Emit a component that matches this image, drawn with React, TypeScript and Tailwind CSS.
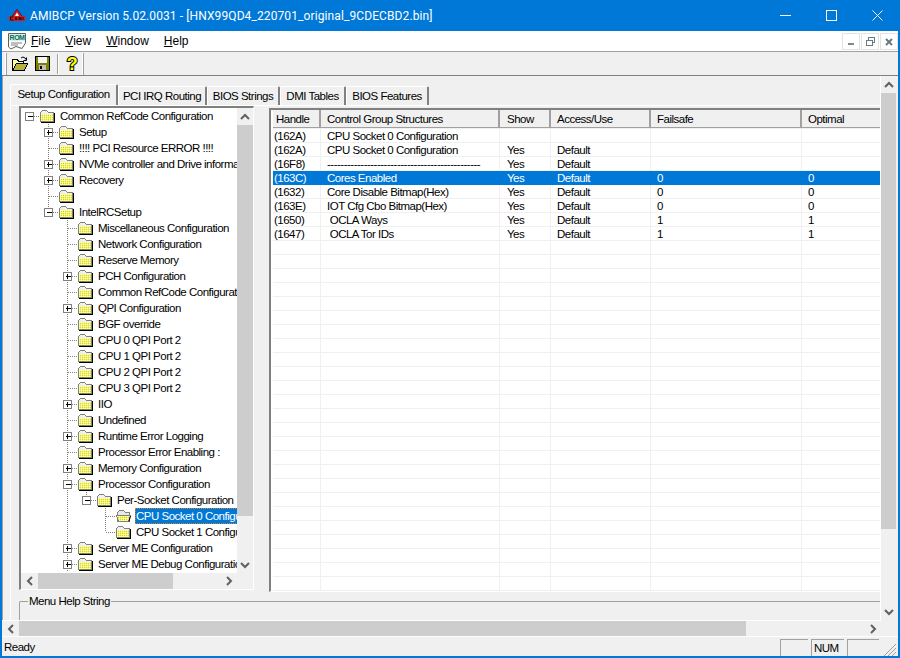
type TreeRow = { t: string; l: number; e?: '+' | '-'; open?: boolean; sel?: boolean };

const tree: TreeRow[] = [
  { t: 'Common RefCode Configuration', l: 0, e: '-' },
  { t: 'Setup', l: 1, e: '+' },
  { t: '!!!! PCI Resource ERROR !!!!', l: 1 },
  { t: 'NVMe controller and Drive information', l: 1, e: '+' },
  { t: 'Recovery', l: 1, e: '+' },
  { t: '', l: 1 },
  { t: 'IntelRCSetup', l: 1, e: '-' },
  { t: 'Miscellaneous Configuration', l: 2 },
  { t: 'Network Configuration', l: 2 },
  { t: 'Reserve Memory', l: 2 },
  { t: 'PCH Configuration', l: 2, e: '+' },
  { t: 'Common RefCode Configuration', l: 2 },
  { t: 'QPI Configuration', l: 2, e: '+' },
  { t: 'BGF override', l: 2 },
  { t: 'CPU 0 QPI Port 2', l: 2 },
  { t: 'CPU 1 QPI Port 2', l: 2 },
  { t: 'CPU 2 QPI Port 2', l: 2 },
  { t: 'CPU 3 QPI Port 2', l: 2 },
  { t: 'IIO', l: 2, e: '+' },
  { t: 'Undefined', l: 2 },
  { t: 'Runtime Error Logging', l: 2, e: '+' },
  { t: 'Processor Error Enabling :', l: 2 },
  { t: 'Memory Configuration', l: 2, e: '+' },
  { t: 'Processor Configuration', l: 2, e: '-' },
  { t: 'Per-Socket Configuration', l: 3, e: '-' },
  { t: 'CPU Socket 0 Configuration', l: 4, open: true, sel: true },
  { t: 'CPU Socket 1 Configuration', l: 4 },
  { t: 'Server ME Configuration', l: 2, e: '+' },
  { t: 'Server ME Debug Configuration', l: 2, e: '+' },
];

const columns = [
  { name: 'Handle', w: 'w-[48px]', head: 'pl-[3px]', cell: 'pl-[1px]' },
  { name: 'Control Group Structures', w: 'w-[179px]', head: 'pl-[6px]', cell: 'pl-[6px]' },
  { name: 'Show', w: 'w-[51px]', head: 'pl-[7px]', cell: 'pl-[7px]' },
  { name: 'Access/Use', w: 'w-[100px]', head: 'pl-[6px]', cell: 'pl-[6px]' },
  { name: 'Failsafe', w: 'w-[151px]', head: 'pl-[6px]', cell: 'pl-[6px]' },
  { name: 'Optimal', w: 'w-[100px]', head: 'pl-[6px]', cell: 'pl-[6px]' },
];

const data = [
  ['(162A)', 'CPU Socket 0 Configuration', '', '', '', ''],
  ['(162A)', 'CPU Socket 0 Configuration', 'Yes', 'Default', '', ''],
  ['(16F8)', '----------------------------------------------', 'Yes', 'Default', '', ''],
  ['(163C)', 'Cores Enabled', 'Yes', 'Default', '0', '0'],
  ['(1632)', 'Core Disable Bitmap(Hex)', 'Yes', 'Default', '0', '0'],
  ['(163E)', 'IOT Cfg Cbo Bitmap(Hex)', 'Yes', 'Default', '0', '0'],
  ['(1650)', ' OCLA Ways', 'Yes', 'Default', '1', '1'],
  ['(1647)', ' OCLA Tor IDs', 'Yes', 'Default', '1', '1'],
];

const emptyRows = Array.from({ length: 25 }, () => ['', '', '', '', '', '']);

function hasNextSibling(i: number, level: number) {
  for (let k = i + 1; k < tree.length; k++) {
    if (tree[k].l === level) return true;
    if (tree[k].l < level) return false;
  }
  return level === 2;
}

function Guides({ row, i }: { row: TreeRow; i: number }) {
  const w = 19 + 19 * row.l;
  const cx = 8.5 + 19 * row.l;
  const dotted = { stroke: '#808080', strokeDasharray: '1 1', shapeRendering: 'crispEdges' as const };
  const ancestors = [];
  for (let j = 1; j < row.l; j++) {
    if (hasNextSibling(i, j)) ancestors.push(8.5 + 19 * j);
  }
  return (
    <svg width={w} height={16} className="shrink-0">
      {ancestors.map((x) => (
        <line key={x} x1={x} x2={x} y1={0} y2={16} {...dotted} />
      ))}
      {row.l > 0 && <line x1={cx} x2={cx} y1={0} y2={hasNextSibling(i, row.l) ? 16 : 8} {...dotted} />}
      <line x1={cx} x2={w} y1={8.5} y2={8.5} {...dotted} />
      {row.e && (
        <g shapeRendering="crispEdges">
          <rect x={cx - 4} y={4.5} width={8} height={8} fill="#fff" stroke="#808080" />
          <line x1={cx - 2} x2={cx + 3} y1={8.5} y2={8.5} stroke="#000" />
          {row.e === '+' && <line x1={cx} x2={cx} y1={6} y2={11} stroke="#000" />}
        </g>
      )}
    </svg>
  );
}

function Folder({ open }: { open?: boolean }) {
  return (
    <svg width={15} height={14} viewBox="0 0 15 14" className="shrink-0" shapeRendering="crispEdges">
      <defs>
        <pattern id="dither" width="2" height="2" patternUnits="userSpaceOnUse">
          <rect width="2" height="2" fill="#ffff30" />
          <rect width="1" height="1" fill="#c8c8a0" />
          <rect x="1" y="1" width="1" height="1" fill="#ffffd0" />
        </pattern>
      </defs>
      {open ? (
        <>
          <path d="M1.5 3.5 L3.5 1.5 H7.5 L9.5 3.5 H13.5 V12.5 H1.5 Z" fill="#e8e8e8" stroke="#808080" />
          <path d="M0.5 6.5 H14.5 L12.5 12.5 H2.5 Z" fill="url(#dither)" stroke="#808080" />
          <path d="M13 12.5 L14.5 7" stroke="#000" fill="none" shapeRendering="auto" />
        </>
      ) : (
        <>
          <path d="M0.5 3.5 L2.5 1.5 H6.5 L8.5 3.5 H13.5 V12.5 H0.5 Z" fill="#f0f0f0" stroke="#808080" />
          <rect x="1" y="5" width="12" height="7" fill="url(#dither)" />
          <path d="M14.5 4 V13.5 H1" stroke="#000" fill="none" />
        </>
      )}
    </svg>
  );
}

function Chevron({ dir }: { dir: 'up' | 'down' | 'left' | 'right' }) {
  const pts = {
    up: '1,6 5,2 9,6',
    down: '1,2 5,6 9,2',
    left: '6,1 2,5 6,9',
    right: '2,1 6,5 2,9',
  }[dir];
  const vertical = dir === 'up' || dir === 'down';
  return (
    <svg width={vertical ? 10 : 8} height={vertical ? 8 : 10} className="shrink-0">
      <polyline points={pts} fill="none" stroke="#606060" strokeWidth="2" />
    </svg>
  );
}

function VScroll({ thumb, cls }: { thumb: string; cls: string }) {
  return (
    <div className={`flex flex-col bg-[#f0f0f0] ${cls}`}>
      <div className="flex h-[17px] shrink-0 items-center justify-center">
        <Chevron dir="up" />
      </div>
      <div className={`shrink-0 bg-[#cdcdcd] ${thumb}`} />
      <div className="flex-1" />
      <div className="flex h-[17px] shrink-0 items-center justify-center">
        <Chevron dir="down" />
      </div>
    </div>
  );
}

function HScroll({ thumb, cls }: { thumb: string; cls: string }) {
  return (
    <div className={`flex bg-[#f0f0f0] ${cls}`}>
      <div className="flex w-[17px] shrink-0 items-center justify-center">
        <Chevron dir="left" />
      </div>
      <div className={`shrink-0 bg-[#cdcdcd] ${thumb}`} />
      <div className="flex-1" />
      <div className="flex w-[17px] shrink-0 items-center justify-center">
        <Chevron dir="right" />
      </div>
    </div>
  );
}

function Tree() {
  return (
    <div className="flex h-[484px] w-[235px] shrink-0 flex-col border-t-2 border-r border-b border-l-2 border-t-[#808080] border-r-white border-b-white border-l-[#808080]">
      <div className="flex min-h-0 flex-1">
        <div className="min-w-0 flex-1 overflow-hidden bg-white">
          {tree.map((row, i) => (
            <div key={i} className="flex h-4 items-center whitespace-nowrap">
              <Guides row={row} i={i} />
              <Folder open={row.open} />
              <span
                className={
                  row.sel
                    ? 'ml-[4px] flex-1 bg-[#0078d7] px-[1px] leading-[16px] text-white outline-1 -outline-offset-1 outline-dotted outline-[#e08020]'
                    : 'ml-[4px] px-[1px] leading-[16px]'
                }
              >
                {row.t}
              </span>
            </div>
          ))}
        </div>
        <VScroll thumb="h-[391px]" cls="w-4 shrink-0" />
      </div>
      <div className="flex h-[16px] shrink-0">
        <HScroll thumb="w-[135px]" cls="flex-1" />
        <div className="w-4 bg-[#f0f0f0]" />
      </div>
    </div>
  );
}

function Grid() {
  return (
    <div className="mt-[2px] h-[484px] w-[640px] shrink-0 overflow-hidden border-t-2 border-b border-l-2 border-t-[#808080] border-b-white border-l-[#808080] bg-white pl-[2px]">
      <div className="flex h-[18px] bg-[#f0f0f0]">
        {columns.map((c) => (
          <div
            key={c.name}
            className={`${c.w} ${c.head} shrink-0 border-r-2 border-b border-r-[#a0a0a0] border-b-[#a0a0a0] leading-[18px]`}
          >
            {c.name}
          </div>
        ))}
      </div>
      <div className="h-[1px] bg-[#f0f0f0]" />
      {[...data, ...emptyRows].map((row, r) => (
        <div key={r} className={`flex h-[14px] ${r === 3 ? 'bg-[#0078d7] text-white' : ''}`}>
          {row.map((cell, c) => (
            <div
              key={c}
              className={`${columns[c].w} ${columns[c].cell} shrink-0 overflow-hidden whitespace-pre leading-[14px] ${
                r === 3 ? '' : 'border-r border-b border-[#f0f0f0]'
              }`}
            >
              {cell}
            </div>
          ))}
        </div>
      ))}
    </div>
  );
}

function Tabs() {
  const rest = [
    { name: 'PCI IRQ Routing', w: 'w-[89px]' },
    { name: 'BIOS Strings', w: 'w-[73px]' },
    { name: 'DMI Tables', w: 'w-[66px]' },
    { name: 'BIOS Features', w: 'w-[83px]' },
  ];
  return (
    <div className="flex h-[21px] items-end pl-[7px] whitespace-nowrap">
      <div className="flex h-[21px] w-[108px] justify-center rounded-t-[2px] border-t border-r-2 border-l border-t-white border-r-[#808080] border-l-white leading-[18px]">
        Setup Configuration
      </div>
      {rest.map((tab) => (
        <div
          key={tab.name}
          className={`${tab.w} flex h-[19px] justify-center rounded-t-[2px] border-t border-r-2 border-l border-t-white border-r-[#808080] border-l-white leading-[18px]`}
        >
          {tab.name}
        </div>
      ))}
    </div>
  );
}

function AppLogo() {
  return (
    <svg width={16} height={14} viewBox="0 0 16 14" className="shrink-0">
      <path d="M8 0.5 L13.5 8 H2.5 Z" fill="#d81e1e" stroke="#600000" strokeWidth="0.8" />
      <path d="M8 3.5 L10 7 H6 Z" fill="#fff" />
      <rect x="0" y="7" width="16" height="5" fill="#e01818" />
      <path d="M1.5 8 H4.5 M1.5 11 H4.5 M1.5 8 V11 M7 8 L6 11 M7 8 L8 11 M10 8 V11 M10 8 L12 11 M12 8 V11 M14 8 V11" stroke="#111" strokeWidth="1" fill="none" />
    </svg>
  );
}

function RomIcon() {
  return (
    <svg width={18} height={17} viewBox="0 0 18 17" className="shrink-0">
      <path d="M0.5 0.5 H17.5 V10 L14 15.5 L8 13.5 L3 16 L0.5 14 Z" fill="#fff" stroke="#606060" />
      <rect x="1" y="1" width="16" height="7" fill="#d8f0ea" />
      <text x="9" y="7.4" textAnchor="middle" fontSize="7" fontWeight="700" fill="#006c60" fontFamily="Liberation Sans, sans-serif">
        ROM
      </text>
      <path d="M3 10 H14 M3 12 H10" stroke="#808080" />
    </svg>
  );
}

function OpenIcon() {
  return (
    <svg width={16} height={16} viewBox="0 0 16 16" shapeRendering="crispEdges" className="shrink-0">
      <path d="M0.5 3.5 H5.5 L6.5 5.5 H11.5 V7.5 H4.5 L1.5 13.5 H0.5 Z" fill="#ffffa0" stroke="#000" />
      <path d="M4.5 7.5 H15.5 L12.5 14.5 H0.5 Z" fill="#b8b040" stroke="#000" />
      <path d="M9 2 Q11 0 13 2 L14.5 4 M14.5 1.5 V4.5 H11.5" fill="none" stroke="#000" shapeRendering="auto" />
    </svg>
  );
}

function SaveIcon() {
  return (
    <svg width={15} height={15} viewBox="0 0 15 15" shapeRendering="crispEdges" className="shrink-0">
      <rect x="0.5" y="0.5" width="14" height="14" fill="#808000" stroke="#000" />
      <rect x="3" y="1" width="9" height="6" fill="#f4f4f4" />
      <rect x="4" y="9" width="7" height="5" fill="#c0c0c0" />
      <rect x="5" y="10" width="2" height="3" fill="#000" />
    </svg>
  );
}

function HelpIcon() {
  return (
    <svg width={14} height={18} viewBox="0 0 14 18" className="shrink-0">
      <text x="7" y="15" textAnchor="middle" fontSize="18" fontWeight="700" fill="#ffff00" stroke="#000" strokeWidth="2" paintOrder="stroke" fontFamily="Liberation Sans, sans-serif">
        ?
      </text>
    </svg>
  );
}

function MdiButton({ children }: { children: React.ReactNode }) {
  return (
    <div className="flex h-[17px] w-[18px] items-center justify-center border border-[#e3e3e3] bg-white">
      {children}
    </div>
  );
}

function Menu({ first, rest }: { first: string; rest: string }) {
  return (
    <span>
      <span className="underline underline-offset-1">{first}</span>
      {rest}
    </span>
  );
}

export default function App() {
  return (
    <div className="flex h-[658px] w-[900px] flex-col overflow-hidden bg-[#0078d7] pr-[2px] pb-[2px] pl-[2px] font-['Liberation_Sans',sans-serif] text-[11.5px] tracking-[-0.5px] text-black">
      {/* title bar */}
      <div className="-mx-[2px] flex h-[31px] shrink-0 items-center pl-[9px] text-white">
        <AppLogo />
        <span className="ml-[5px] whitespace-nowrap font-['Roboto',sans-serif] text-[12px] tracking-[0.1px]">
          AMIBCP Version 5.02.0031 - [HNX99QD4_220701_original_9CDECBD2.bin]
        </span>
        <div className="ml-auto flex">
          <div className="flex h-[31px] w-[46px] items-center justify-center">
            <svg width={11} height={11} shapeRendering="crispEdges">
              <line x1={0} x2={11} y1={5.5} y2={5.5} stroke="#fff" />
            </svg>
          </div>
          <div className="flex h-[31px] w-[46px] items-center justify-center">
            <svg width={11} height={11} shapeRendering="crispEdges">
              <rect x={0.5} y={0.5} width={10} height={10} fill="none" stroke="#fff" />
            </svg>
          </div>
          <div className="flex h-[31px] w-[46px] items-center justify-center">
            <svg width={11} height={11}>
              <path d="M0.5 0.5 L10.5 10.5 M10.5 0.5 L0.5 10.5" stroke="#fff" />
            </svg>
          </div>
        </div>
      </div>

      {/* menu */}
      <div className="flex h-[20px] shrink-0 items-center bg-white pl-[6px]">
        <RomIcon />
        <div className="ml-[5px] flex gap-[15px] text-[12px] tracking-[0px]">
          <Menu first="F" rest="ile" />
          <Menu first="V" rest="iew" />
          <Menu first="W" rest="indow" />
          <Menu first="H" rest="elp" />
        </div>
        <div className="mt-[1px] ml-auto flex gap-[1px]">
          <MdiButton>
            <div className="mt-[5px] h-[2px] w-[6px] bg-[#7a8a94]" />
          </MdiButton>
          <MdiButton>
            <svg width={9} height={9} fill="none" stroke="#6a7a84" shapeRendering="crispEdges">
              <rect x="2.5" y="0.5" width="6" height="5" />
              <rect x="0.5" y="3.5" width="6" height="5" fill="#fff" />
            </svg>
          </MdiButton>
          <MdiButton>
            <svg width={8} height={8}>
              <path d="M1 1 L7 7 M7 1 L1 7" stroke="#6a7a84" strokeWidth="2" />
            </svg>
          </MdiButton>
        </div>
      </div>

      {/* toolbar */}
      <div className="flex h-[25px] shrink-0 items-center border-t border-b border-t-[#a0a0a0] border-b-[#808080] bg-[#f0f0f0] pl-[3px]">
        <div className="h-[22px] w-[2px] border-r border-[#a0a0a0] bg-white" />
        <div className="ml-[5px] flex items-center">
          <OpenIcon />
          <div className="ml-[7px]">
            <SaveIcon />
          </div>
          <div className="mr-[6px] ml-[7px] h-[20px] w-[2px] border-r border-white bg-[#a0a0a0]" />
          <HelpIcon />
        </div>
        <div className="ml-[3px] h-[22px] w-[2px] border-r border-[#a0a0a0] bg-white" />
      </div>

      {/* scrolled client area */}
      <div className="flex min-h-0 flex-1 flex-col bg-[#f0f0f0]">
        <div className="flex min-h-0 flex-1">
          <div className="min-w-0 flex-1 overflow-hidden border-r border-l border-r-white border-l-[#a0a0a0] pt-[8px]">
            <Tabs />
            <div className="ml-[7px] h-[600px] w-[960px] border-t border-l border-white pl-[8px]">
              <div className="flex gap-[15px]">
                <Tree />
                <Grid />
              </div>
              <div className="mt-[9px] h-[60px] rounded-tl-[2px] border-t border-l border-[#a0a0a0] pl-[8px]">
                <span className="relative -top-[9px] bg-[#f0f0f0] px-[1px]">Menu Help String</span>
              </div>
            </div>
          </div>
          <VScroll thumb="h-[436px]" cls="w-[17px] shrink-0 pr-[2px]" />
        </div>
        <div className="flex h-[16px] shrink-0">
          <HScroll thumb="w-[727px]" cls="flex-1 border-t border-white" />
          <div className="w-[17px]" />
        </div>
      </div>

      {/* status bar */}
      <div className="flex h-[20px] shrink-0 items-end border-t border-white bg-[#f0f0f0] pl-[2px]">
        <span className="mb-[1px] leading-[16px]">Ready</span>
        <div className="ml-auto flex gap-[3px]">
          <div className="h-[17px] w-[28px] border-t border-l border-[#a0a0a0]" />
          <div className="h-[17px] w-[33px] border-t border-l border-[#a0a0a0] pl-[2px] leading-[16px]">NUM</div>
          <div className="h-[17px] w-[32px] border-t border-l border-[#a0a0a0]" />
        </div>
        <svg width={17} height={14} className="ml-[2px] shrink-0">
          <path d="M3 14 L15 2 M7 14 L15 6 M11 14 L15 10" stroke="#a0a0a0" />
        </svg>
      </div>
    </div>
  );
}
